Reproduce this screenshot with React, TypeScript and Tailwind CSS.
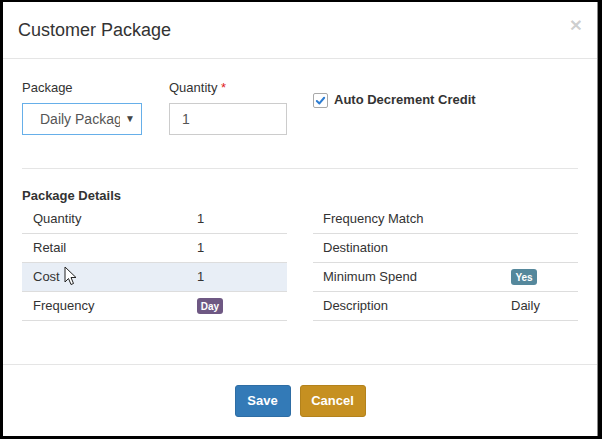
import React from 'react';

type Row = { label: string; value?: React.ReactNode; active?: boolean };

const leftRows: Row[] = [
  { label: 'Quantity', value: '1' },
  { label: 'Retail', value: '1' },
  { label: 'Cost', value: '1', active: true },
  { label: 'Frequency', value: <Badge color="bg-[#6e5883]">Day</Badge> },
];

const rightRows: Row[] = [
  { label: 'Frequency Match' },
  { label: 'Destination' },
  { label: 'Minimum Spend', value: <Badge color="bg-[#55889c]">Yes</Badge> },
  { label: 'Description', value: 'Daily' },
];

function Badge({ color, children }: { color: string; children: React.ReactNode }) {
  return (
    <span className={`inline-flex h-[16px] w-[26px] items-center justify-center rounded-[3px] text-[10px] font-bold text-white ${color}`}>
      {children}
    </span>
  );
}

function DetailsTable({ rows, labelWidth, pad }: { rows: Row[]; labelWidth: string; pad: string }) {
  return (
    <div className="flex flex-col">
      {rows.map((row) => (
        <div
          key={row.label}
          className={`relative flex h-[29px] items-center border-b border-[#dddddd] ${row.active ? 'bg-[#e8eef6]' : ''}`}
        >
          <div className={`${labelWidth} ${pad}`}>{row.label}</div>
          <div className="flex items-center">{row.value}</div>
          {row.active && (
            <svg className="absolute left-[42px] top-[3px]" width="13" height="20" viewBox="0 0 13 20">
              <path d="M1 1 L1 16 L4.5 12.5 L7 18.5 L9.5 17.5 L7 11.5 L12 11.5 Z" fill="#ffffff" stroke="#222" strokeWidth="1" strokeLinejoin="round" />
            </svg>
          )}
        </div>
      ))}
    </div>
  );
}

const App = (): JSX.Element => {
  return (
    <div className="h-[439px] w-[602px] bg-black pl-[3px] pt-[2px] text-[13px] text-[#333333] [font-family:'Liberation_Sans',Arial,sans-serif]">
      <div className="flex h-[434px] w-[595px] flex-col border-r border-[#8a8a8a] bg-white">
        <div className="flex h-[57px] shrink-0 items-start justify-between border-b border-[#e5e5e5] px-[15px]">
          <h4 className="mt-[15px] text-[18px] leading-[26px]">Customer Package</h4>
          <span className="mt-[10px] text-[21px] font-bold leading-[26px] text-black/20">×</span>
        </div>

        <div className="flex flex-1 flex-col px-[19px] pt-[20px]">
          <div className="grid grid-cols-2 gap-x-[26px]">
            <div className="flex gap-[27px]">
              <div className="flex flex-col">
                <label className="mb-[6px] leading-[18px]">Package</label>
                <div className="flex h-[32px] w-[120px] items-center border border-[#66afe9] pl-[17px] pr-[6px] text-[14px] text-[#555555]">
                  <span className="w-[80px] overflow-hidden whitespace-nowrap">Daily Package</span>
                  <span className="ml-auto text-[10px] leading-none text-[#444]">▼</span>
                </div>
              </div>
              <div className="flex flex-col">
                <label className="mb-[6px] leading-[18px]">
                  Quantity <span className="text-[#e02020]">*</span>
                </label>
                <div className="flex h-[32px] w-[118px] items-center border border-[#cccccc] pl-[12px] text-[14px] text-[#555555]">1</div>
              </div>
            </div>
            <div className="mt-[13px] flex h-[16px] items-center gap-[6px] font-bold">
              <span className="flex h-[15px] w-[15px] items-center justify-center rounded-[2px] border border-[#a9a9a9] bg-white">
                <svg width="11" height="11" viewBox="0 0 12 12">
                  <path d="M2 6.5 L4.8 9.2 L10 3" fill="none" stroke="#2d7dd2" strokeWidth="2.2" strokeLinecap="round" strokeLinejoin="round" />
                </svg>
              </span>
              Auto Decrement Credit
            </div>
          </div>

          <hr className="mt-[33px] border-[#e5e5e5]" />

          <div className="mt-[18px] font-bold leading-[18px]">Package Details</div>
          <div className="grid grid-cols-2 gap-x-[26px]">
            <DetailsTable rows={leftRows} labelWidth="w-[175px]" pad="pl-[11px]" />
            <DetailsTable rows={rightRows} labelWidth="w-[198px]" pad="pl-[10px]" />
          </div>
        </div>

        <div className="flex h-[72px] shrink-0 justify-center gap-[9px] border-t border-[#e5e5e5] pt-[20px]">
          <button className="h-[32px] w-[56px] rounded-[3px] border border-[#2e6da4] bg-[#337ab7] text-[13px] font-bold text-white">Save</button>
          <button className="h-[32px] w-[66px] rounded-[3px] border border-[#b3821c] bg-[#c69021] text-[13px] font-bold text-white">Cancel</button>
        </div>
      </div>
    </div>
  );
};

export default App;
